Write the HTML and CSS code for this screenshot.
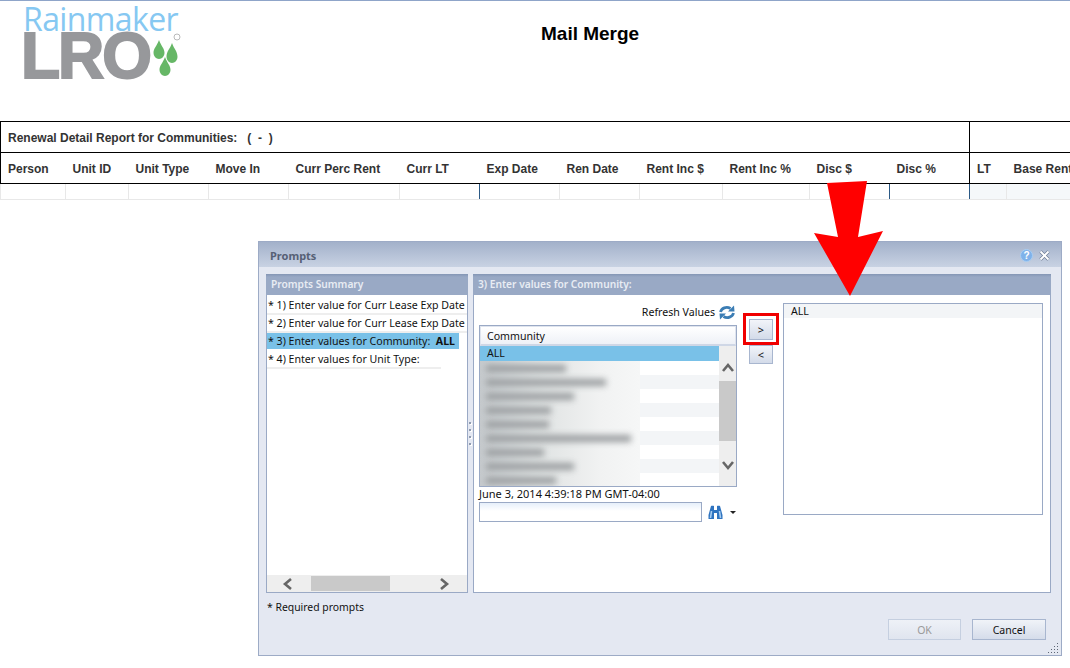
FILE: index.html
```html
<!DOCTYPE html>
<html lang="en">
<head>
    <meta charset="UTF-8">
    <title>Mail Merge</title>
    <link rel="stylesheet" href="styles.css">
</head>
<body>
    <div class="cabecalho">
        <div class="logo">
            <div class="logo-chuva">Rainmaker</div>
            <div class="logo-lro">LRO</div>
            <svg class="logo-gotas" width="30" height="46" viewBox="0 0 30 46">
                <circle cx="25" cy="4" r="3" fill="none" stroke="#a8a8aa" stroke-width="0.8"/>
                <path d="M7 7 C9 13 12.5 15 12.5 20 A5.5 6 0 0 1 1.5 20 C1.5 15 5 13 7 7Z" fill="#66b766"/>
                <path d="M20 10 C22 16 25.5 18 25.5 24 A5.5 6 0 0 1 14.5 24 C14.5 18 18 16 20 10Z" fill="#66b766"/>
                <path d="M13 24 C15 30 18.5 32 18.5 37 A5.5 6 0 0 1 7.5 37 C7.5 32 11 30 13 24Z" fill="#66b766"/>
            </svg>
        </div>
        <h1>Mail Merge</h1>
    </div>

    <table class="relatorio">
        <colgroup>
            <col style="width:65px"><col style="width:63px"><col style="width:80px"><col style="width:80px">
            <col style="width:111px"><col style="width:80px"><col style="width:80px"><col style="width:80px">
            <col style="width:83px"><col style="width:87px"><col style="width:80px"><col style="width:80px">
            <col style="width:37px"><col style="width:100px">
        </colgroup>
        <tr class="linha-titulo">
            <th colspan="12">Renewal Detail Report for Communities: &nbsp;&nbsp;( &nbsp;- &nbsp;)</th>
            <th colspan="2" class="bloco"></th>
        </tr>
        <tr class="linha-nomes">
            <th>Person</th><th>Unit ID</th><th>Unit Type</th><th>Move In</th>
            <th>Curr Perc Rent</th><th>Curr LT</th><th>Exp Date</th><th>Ren Date</th>
            <th>Rent Inc $</th><th>Rent Inc %</th><th>Disc $</th><th>Disc %</th>
            <th class="bloco">LT</th><th>Base Rent</th>
        </tr>
        <tr class="linha-dados">
            <td></td><td></td><td></td><td></td><td></td><td></td>
            <td class="escura"></td><td></td><td></td><td></td><td></td>
            <td class="escura"></td><td class="escura claro"></td><td class="claro"></td>
        </tr>
    </table>

    <div class="janela">
        <div class="janela-topo">
            <span class="janela-nome">Prompts</span>
            <svg width="13" height="13" viewBox="0 0 13 13">
                <circle cx="6.5" cy="6.5" r="6" fill="#7fb2ea" stroke="#a9cdf2"/>
                <text x="6.5" y="10" text-anchor="middle" class="ajuda">?</text>
            </svg>
            <svg width="11" height="11" viewBox="0 0 11 11">
                <path d="M1.5 1.5 L9.5 9.5 M9.5 1.5 L1.5 9.5" stroke="#6b7890" stroke-width="3.2"/>
                <path d="M1.5 1.5 L9.5 9.5 M9.5 1.5 L1.5 9.5" stroke="#fff" stroke-width="2"/>
            </svg>
        </div>

        <div class="paineis">
            <div class="painel resumo">
                <div class="painel-titulo">Prompts Summary</div>
                <div class="resumo-lista">
                    <div class="item">* 1) Enter value for Curr Lease Exp Date</div>
                    <div class="item">* 2) Enter value for Curr Lease Exp Date</div>
                    <div class="item selecionado">* 3) Enter values for Community: &nbsp;<b>ALL</b></div>
                    <div class="item curto">* 4) Enter values for Unit Type:</div>
                </div>
                <div class="barra-h">
                    <svg width="12" height="14" viewBox="0 0 12 14"><path d="M9 2 L3 7 L9 12" fill="none" stroke="#666" stroke-width="2.6"/></svg>
                    <div class="barra-h-pega"></div>
                    <svg width="12" height="14" viewBox="0 0 12 14"><path d="M3 2 L9 7 L3 12" fill="none" stroke="#666" stroke-width="2.6"/></svg>
                </div>
            </div>

            <div class="divisor">
                <span></span><span></span><span></span><span></span>
            </div>

            <div class="painel valores">
                <div class="painel-titulo">3) Enter values for Community:</div>
                <div class="valores-corpo">
                    <div class="coluna-lista">
                        <div class="atualizar">
                            Refresh Values
                            <svg width="16" height="15" viewBox="0 0 16 15">
                                <path d="M1.5 7 C2.5 3 7.5 1 11.5 3.5" fill="none" stroke="#3b7db4" stroke-width="2.8"/>
                                <path d="M9 6.5 L15.5 6.5 L15 0.5 Z" fill="#3b7db4"/>
                                <path d="M14.5 8 C13.5 12 8.5 14 4.5 11.5" fill="none" stroke="#3b7db4" stroke-width="2.8"/>
                                <path d="M7 8.5 L0.5 8.5 L1 14.5 Z" fill="#3b7db4"/>
                            </svg>
                        </div>
                        <div class="lista">
                            <div class="lista-nome"><span>Community</span></div>
                            <div class="lista-corpo">
                                <div class="linhas">
                                    <div class="linha ativa">ALL</div>
                                    <div class="linha"></div><div class="linha par"></div>
                                    <div class="linha"></div><div class="linha par"></div>
                                    <div class="linha"></div><div class="linha par"></div>
                                    <div class="linha"></div><div class="linha par"></div>
                                    <div class="linha"></div>
                                    <div class="borrao">
                                        <i style="width:80px"></i><i style="width:120px"></i>
                                        <i style="width:88px"></i><i style="width:65px"></i>
                                        <i style="width:63px"></i><i style="width:145px"></i>
                                        <i style="width:58px"></i><i style="width:88px"></i>
                                        <i style="width:70px"></i>
                                    </div>
                                </div>
                                <div class="barra-v">
                                    <svg width="14" height="12" viewBox="0 0 14 12"><path d="M2 9 L7 3 L12 9" fill="none" stroke="#666" stroke-width="2.6"/></svg>
                                    <div class="barra-v-pega"></div>
                                    <svg width="14" height="12" viewBox="0 0 14 12"><path d="M2 3 L7 9 L12 3" fill="none" stroke="#666" stroke-width="2.6"/></svg>
                                </div>
                            </div>
                        </div>
                        <div class="data">June 3, 2014 4:39:18 PM GMT-04:00</div>
                        <div class="procura">
                            <input type="text" class="campo">
                            <svg width="15" height="15" viewBox="0 0 15 15">
                                <path d="M3 1 C3 0.5 6 0.5 6 1 V5 H9 V1 C9 0.5 12 0.5 12 1 L14.5 10 V14 H9 V8 H6 V14 H0.5 V10 Z" fill="#2f74c0"/>
                                <path d="M3.5 6 L2.5 13 M11.5 6 L12.5 13" stroke="#a8cdf0" stroke-width="1.6"/>
                            </svg>
                            <svg width="6" height="3" viewBox="0 0 6 3"><path d="M0 0 H6 L3 3Z" fill="#222"/></svg>
                        </div>
                    </div>

                    <div class="setas">
                        <div class="seta-caixa">
                            <button type="button" class="seta">&gt;</button>
                            <div class="destaque"></div>
                        </div>
                        <button type="button" class="seta baixa">&lt;</button>
                    </div>

                    <div class="escolhidos">
                        <div class="escolhido">ALL</div>
                    </div>
                </div>
            </div>
        </div>

        <div class="nota">* Required prompts</div>

        <div class="botoes">
            <button type="button" class="botao" disabled>OK</button>
            <button type="button" class="botao">Cancel</button>
        </div>
        <svg class="pega" width="11" height="11" viewBox="0 0 11 11">
            <path d="M9 1h1v1h-1zM6 4h1v1h-1zM9 4h1v1h-1zM3 7h1v1h-1zM6 7h1v1h-1zM9 7h1v1h-1zM0 10h1v1h-1zM3 10h1v1h-1zM6 10h1v1h-1zM9 10h1v1h-1z" fill="#5d6675"/>
        </svg>
    </div>

    <svg class="seta-vermelha" width="70" height="116" viewBox="0 0 70 116">
        <polygon points="13,2 53,0 44,56 69,50 36,115 0,52 24,56" fill="#ff0000"/>
    </svg>
</body>
</html>
```

FILE: styles.css
```css
html, body {
    height: 668px;
    overflow: hidden;
}
body {
    margin: 0;
    background: #ffffff;
    border-top: 1px solid #8fa5c9;
    font-family: "Liberation Sans", Arial, sans-serif;
    position: relative;
}

/* cabecalho */
.cabecalho {
    display: flex;
    height: 120px;
    padding-left: 24px;
}
.logo {
    position: relative;
    width: 156px;
    padding-top: 4px;
}
.logo-chuva {
    font-family: "Open Sans", sans-serif;
    font-weight: 400;
    font-size: 32px;
    line-height: 28px;
    color: #86c8f2;
    letter-spacing: -0.6px;
    margin-left: -1px;
}
.logo-lro {
    font-size: 64px;
    line-height: 46px;
    font-weight: 700;
    color: #97989b;
    letter-spacing: -2px;
    -webkit-text-stroke: 2px #97989b;
    margin-left: -3px;
}
.logo-gotas {
    position: absolute;
    left: 128px;
    top: 32px;
}
h1 {
    margin: 22px 0 0 361px;
    font-size: 19px;
    line-height: 22px;
    font-weight: 700;
    color: #000000;
}

/* tabela */
.relatorio {
    border-collapse: collapse;
    table-layout: fixed;
    width: 1106px;
}
.relatorio th {
    text-align: left;
    font-size: 12px;
    color: #333333;
    padding: 2px 0 0 7px;
    white-space: nowrap;
    overflow: hidden;
}
.linha-titulo th {
    height: 28px;
    border-top: 1px solid #000000;
    border-bottom: 1px solid #000000;
}
.linha-titulo th:first-child, .linha-nomes th:first-child {
    border-left: 1px solid #000000;
}
.linha-nomes th {
    height: 28px;
    border-bottom: 1px solid #000000;
}
.relatorio th.bloco {
    border-left: 1px solid #000000;
}
.linha-dados td {
    height: 15px;
    padding: 0;
    border-left: 1px solid #e8e8e8;
    border-bottom: 1px solid #e8e8e8;
}
.linha-dados td.escura {
    border-left: 1px solid #2c5a85;
}
.linha-dados td.claro {
    background: #f5f8fa;
}

/* janela */
.janela {
    position: absolute;
    left: 258px;
    top: 240px;
    width: 802px;
    height: 413px;
    border: 1px solid #9dabc6;
    background: #e4e8f2;
    font-family: "Noto Sans", sans-serif;
    font-size: 10.6px;
    color: #111111;
}
.janela-topo {
    display: flex;
    align-items: center;
    gap: 6px;
    box-sizing: border-box;
    height: 25px;
    padding: 2px 11px 0;
    background: linear-gradient(#a3b1ca, #c8d2e3);
}
.janela-nome {
    flex: 1;
    font-size: 11px;
    font-weight: 700;
    color: #566075;
}
.ajuda {
    font-family: "Liberation Sans", sans-serif;
    font-size: 10px;
    font-weight: 700;
    fill: #ffffff;
}
.paineis {
    display: flex;
    height: 319px;
    margin: 7px 10px 0 7px;
}
.painel {
    display: flex;
    flex-direction: column;
    box-sizing: border-box;
    border: 1px solid #9aa9c5;
    border-top: 0;
    background: #ffffff;
}
.painel-titulo {
    height: 20px;
    line-height: 19px;
    padding-left: 5px;
    margin: 0 -1px;
    padding-top: 1px;
    background: linear-gradient(#8496b5, #99a9c5 3px);
    font-weight: 600;
    color: #e8ecf3;
    font-size: 10.2px;
}
.resumo {
    width: 202px;
}
.resumo-lista {
    flex: 1;
    overflow: hidden;
    padding-top: 2px;
}
.item {
    box-sizing: border-box;
    height: 18px;
    line-height: 16px;
    padding-left: 1px;
    border-bottom: 2px solid #eeeeee;
    white-space: nowrap;
}
.item.selecionado {
    width: 192px;
    background: #79c1e8;
    border-bottom-color: #ffffff;
}
.item.curto {
    width: 174px;
}
.barra-h {
    display: flex;
    align-items: center;
    height: 17px;
    padding: 0 15px;
    background: #eeeeee;
}
.barra-h-pega {
    width: 79px;
    height: 15px;
    background: #c9c9c9;
    margin-left: 17px;
    margin-right: 48px;
}
.divisor {
    display: flex;
    flex-direction: column;
    justify-content: center;
    gap: 5px;
    width: 5px;
    padding-left: 1px;
    box-sizing: border-box;
}
.divisor span {
    width: 2px;
    height: 2px;
    background: #8f9bb0;
    box-shadow: 1px 1px 0 #ffffff;
}
.valores {
    width: 578px;
}
.valores-corpo {
    flex: 1;
    display: flex;
    padding: 8px 7px 0 5px;
}
.coluna-lista {
    width: 258px;
}
.atualizar {
    display: flex;
    justify-content: flex-end;
    align-items: center;
    gap: 4px;
    height: 18px;
    padding-right: 2px;
    margin-bottom: 4px;
}
.lista {
    box-sizing: border-box;
    height: 162px;
    border: 1px solid #9aa9c5;
}
.lista-nome {
    height: 20px;
    box-sizing: border-box;
    border: 1px solid #dfe4ee;
    border-bottom: 2px solid #cfd7e6;
    background: linear-gradient(#ffffff, #eef1f7);
    line-height: 18px;
    padding-left: 6px;
}
.lista-corpo {
    display: flex;
    height: 140px;
}
.linhas {
    position: relative;
    flex: 1;
    overflow: hidden;
}
.linha {
    height: 14px;
    line-height: 14px;
    padding-left: 7px;
}
.linha.par {
    background: #f3f5f7;
}
.linha.ativa {
    height: 15px;
    line-height: 15px;
    background: #79c1e8;
}
.borrao {
    position: absolute;
    left: 0;
    top: 15px;
    box-sizing: border-box;
    width: 160px;
    height: 126px;
    padding-top: 4px;
    background: linear-gradient(90deg, #c6cacd, #dfe2e2 35%, #f1f2f2 75%, #f6f7f7);
    overflow: hidden;
}
.borrao i {
    display: block;
    height: 7px;
    margin: 0 0 7px 6px;
    background: #9a9ea0;
    filter: blur(3px);
}
.barra-v {
    display: flex;
    flex-direction: column;
    align-items: center;
    width: 17px;
    background: #eeeeee;
}
.barra-v svg:first-child {
    margin-top: 16px;
}
.barra-v-pega {
    width: 17px;
    height: 60px;
    margin: 7px 0 18px;
    background: #c9c9c9;
}
.data {
    height: 15px;
    line-height: 14px;
    font-size: 11px;
}
.procura {
    display: flex;
    align-items: center;
}
.campo {
    box-sizing: border-box;
    width: 223px;
    height: 20px;
    padding: 0;
    margin: 0 6px 0 0;
    border: 1px solid #9aa9c5;
    background: linear-gradient(#e6effa, #ffffff 8px);
}
.procura svg:last-child {
    margin-left: 7px;
}
.setas {
    display: flex;
    flex-direction: column;
    gap: 5px;
    padding: 16px 0 0 12px;
    width: 34px;
}
.seta-caixa {
    position: relative;
    width: 24px;
    height: 21px;
}
.seta {
    display: block;
    box-sizing: border-box;
    width: 24px;
    height: 21px;
    padding: 0;
    border: 1px solid #a8b6cf;
    background: linear-gradient(#f2f4f9, #d3dbe9);
    font-family: "Noto Sans", sans-serif;
    font-size: 11px;
    color: #111111;
}
.seta.baixa {
    height: 19px;
}
.destaque {
    position: absolute;
    inset: -6px -6px -5px -6px;
    border: 3px solid #f00000;
}
.escolhidos {
    box-sizing: border-box;
    width: 260px;
    height: 212px;
    border: 1px solid #9aa9c5;
}
.escolhido {
    height: 14px;
    line-height: 14px;
    padding-left: 7px;
    background: #f3f5f7;
}
.nota {
    margin: 7px 0 0 8px;
    line-height: 14px;
    font-size: 10.4px;
}
.botoes {
    display: flex;
    justify-content: flex-end;
    gap: 11px;
    margin: 5px 15px 0 0;
}
.botao {
    box-sizing: border-box;
    width: 74px;
    height: 21px;
    padding: 0;
    border: 1px solid #a8b6cf;
    background: linear-gradient(#f0f3f8, #d5dcea);
    font-family: "Noto Sans", sans-serif;
    font-size: 10.5px;
    color: #111111;
}
.botao:disabled {
    width: 73px;
    color: #9a9a9a;
    border-color: #c5cfe0;
    background: linear-gradient(#eef1f7, #e0e5ef);
}
.pega {
    position: absolute;
    right: 2px;
    bottom: 2px;
}
.seta-vermelha {
    position: absolute;
    left: 814px;
    top: 180px;
}
```
